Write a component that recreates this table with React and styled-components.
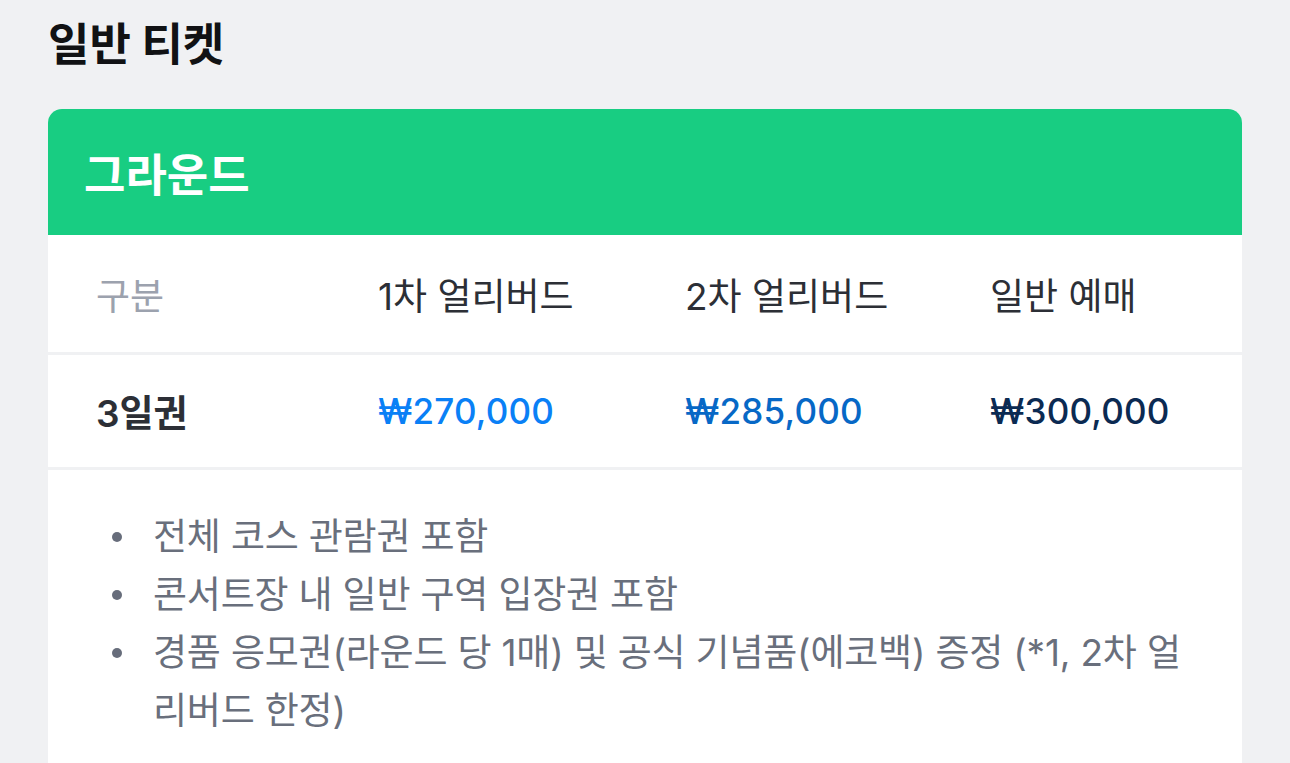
import React from 'react';
import styled, { createGlobalStyle } from 'styled-components';

const GlobalStyle = createGlobalStyle`
  html, body {
    margin: 0;
    padding: 0;
    background: #f0f1f3;
  }
  body {
    font-family: "Inter", "Noto Sans CJK KR", sans-serif;
    -webkit-font-smoothing: antialiased;
  }
`;

const Page = styled.div`
  padding: 15px 48px 0;
  min-height: 763px;
  box-sizing: border-box;
`;

const Title = styled.h2`
  margin: 0 0 34px;
  font-size: 45px;
  line-height: 60px;
  font-weight: 700;
  color: #111214;
`;

const Card = styled.div`
  background: #fff;
  border-radius: 14px 14px 0 0;
  overflow: hidden;
`;

const CardHeader = styled.div`
  display: flex;
  align-items: center;
  height: 126px;
  padding: 0 36px;
  background: #18cd82;
  color: #fff;
  font-size: 45px;
  font-weight: 700;
`;

const Row = styled.div`
  display: grid;
  grid-template-columns: 282px 307px 305px 1fr;
  align-items: center;
  height: ${p => p.$h}px;
  padding: 0 48px;
  border-bottom: 3px solid #f0f1f3;
`;

const Cell = styled.div`
  font-size: 37px;
  font-weight: ${p => (p.$bold ? 600 : 400)};
  color: ${p => p.$color || '#2c2f36'};
  white-space: nowrap;
`;

const Price = styled.div`
  font-size: 35px;
  font-weight: 500;
  letter-spacing: 0.2px;
  color: ${p => p.$color};
`;

const List = styled.ul`
  list-style: none;
  margin: 0;
  padding: 38px 48px 40px 64px;
`;

const Item = styled.li`
  display: flex;
  gap: 31px;
  font-size: 37px;
  line-height: 58px;
  letter-spacing: -0.2px;
  color: #696f7c;
`;

const Dot = styled.span`
  flex: none;
  display: flex;
  align-items: center;
  height: 58px;

  &::after {
    content: '';
    width: 10px;
    height: 10px;
    border-radius: 50%;
    background: #676d7b;
  }
`;

const prices = [
  { label: '₩270,000', color: '#0a80f6' },
  { label: '₩285,000', color: '#0768c6' },
  { label: '₩300,000', color: '#0b2a52' },
];

const notes = [
  '전체 코스 관람권 포함',
  '콘서트장 내 일반 구역 입장권 포함',
  '경품 응모권(라운드 당 1매) 및 공식 기념품(에코백) 증정 (*1, 2차 얼리버드 한정)',
];

export default function App() {
  return (
    <>
      <GlobalStyle />
      <Page>
        <Title>일반 티켓</Title>
        <Card>
          <CardHeader>그라운드</CardHeader>
          <Row $h={117}>
            <Cell $color="#9ca2ae">구분</Cell>
            <Cell>1차 얼리버드</Cell>
            <Cell>2차 얼리버드</Cell>
            <Cell>일반 예매</Cell>
          </Row>
          <Row $h={112}>
            <Cell $bold>3일권</Cell>
            {prices.map(p => (
              <Price key={p.label} $color={p.color}>{p.label}</Price>
            ))}
          </Row>
          <List>
            {notes.map(n => (
              <Item key={n}>
                <Dot />
                <span>{n}</span>
              </Item>
            ))}
          </List>
        </Card>
      </Page>
    </>
  );
}
